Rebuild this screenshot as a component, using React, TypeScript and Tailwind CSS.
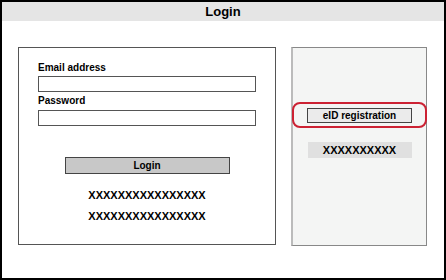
import React from 'react';

const App: React.FC = () => {
  return (
    <div
      className="w-[446px] h-[280px] border-2 border-black bg-white flex flex-col text-black"
      style={{ fontFamily: '"Liberation Sans", Arial, sans-serif' }}
    >
      <div className="h-[19px] bg-[#e5e5e5] flex items-center justify-center text-[13px] font-bold">
        Login
      </div>

      <div className="flex pl-[16px] pt-[26px] gap-[15px]">
        {/* login form */}
        <div className="w-[258px] h-[198px] border border-[#555] flex flex-col">
          <div className="pl-[19px] pt-[14px] flex flex-col">
            <label className="text-[10px] font-bold leading-[12px]">Email address</label>
            <div className="mt-[2px] w-[218px] h-[16px] border border-[#555] bg-white" />
            <label className="mt-[3px] text-[10px] font-bold leading-[12px]">Password</label>
            <div className="mt-[3px] w-[218px] h-[16px] border border-[#555] bg-white" />
          </div>
          <div className="flex justify-center mt-[31px]">
            <button className="w-[165px] h-[17px] bg-[#c8c8c8] border border-[#444] text-[10px] font-bold leading-none">
              Login
            </button>
          </div>
          <div className="flex flex-col items-center mt-[11px] text-[11px] font-bold leading-[21px]">
            <span>XXXXXXXXXXXXXXXX</span>
            <span>XXXXXXXXXXXXXXXX</span>
          </div>
        </div>

        {/* eID panel */}
        <div className="relative w-[136px] h-[199px] bg-[#f4f5f4] border border-[#888] border-l-[#bbb] border-l-2 flex flex-col items-center">
          <div className="absolute left-[-1px] top-[54px] w-[135px] h-[26px] rounded-[8px] border-2 border-[#cc2233]" />
          <button className="mt-[60px] w-[105px] h-[15px] bg-[#ebebeb] border border-[#444] text-[10px] font-bold leading-none">
            eID registration
          </button>
          <div className="mt-[19px] w-[104px] h-[16px] bg-[#e0e0e0] flex items-center justify-center text-[11px] font-bold">
            XXXXXXXXXX
          </div>
        </div>
      </div>
    </div>
  );
};

export default App;
